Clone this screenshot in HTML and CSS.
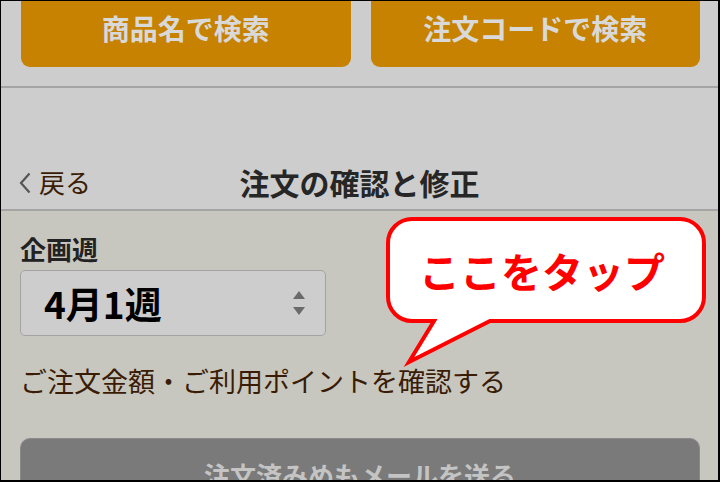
FILE: index.html
```html
<!DOCTYPE html>
<html lang="ja">

<head>
  <meta charset="UTF-8" />
  <meta name="viewport" content="width=device-width, initial-scale=1.0" />
  <title>注文の確認と修正</title>
  <link rel="stylesheet" href="styles.css">
</head>

<body>
  <div class="frame">

    <!-- Search buttons -->
    <div class="search-bar">
      <div class="search-btn">商品名で検索</div>
      <div class="search-btn">注文コードで検索</div>
    </div>

    <!-- Page header -->
    <div class="page-header">
      <a class="back-link">
        <svg class="chev" width="12" height="22" viewBox="0 0 12 22">
          <path d="M10.5 1.5 L2 11 L10.5 20.5" fill="none" stroke="#555" stroke-width="2.2" />
        </svg>戻る
      </a>
      <h1>注文の確認と修正</h1>
      <span></span>
    </div>

    <!-- Content -->
    <div class="content">
      <label class="field-label">企画週</label>
      <div class="week-select">
        <span>4月1週</span>
        <svg class="arrows" width="12" height="26" viewBox="0 0 12 26">
          <path d="M6 1 L12 9 H0 Z" fill="#6a6a6a" />
          <path d="M0 17 H12 L6 25 Z" fill="#6a6a6a" />
        </svg>
      </div>
      <p class="confirm-link">ご注文金額・ご利用ポイントを確認する</p>
      <div class="mail-btn">注文済みめもメールを送る</div>
    </div>

    <!-- Callout -->
    <div class="callout">
      <svg width="324" height="154" viewBox="384 215 324 154">
        <path d="M412 219 H680 A24 24 0 0 1 704 243 V297 A24 24 0 0 1 680 321 H490 L409 362 L434 321 H412 A24 24 0 0 1 388 297 V243 A24 24 0 0 1 412 219 Z"
          fill="#fff" stroke="#ff0000" stroke-width="4" stroke-linejoin="miter" stroke-miterlimit="10" />
      </svg>
      <div class="callout-text">ここをタップ</div>
    </div>

  </div>
</body>

</html>
```

FILE: styles.css
```css
* {
  margin: 0;
  padding: 0;
  box-sizing: border-box;
}

html,
body {
  width: 720px;
  height: 482px;
  overflow: hidden;
  font-family: "Noto Sans CJK JP", "Noto Sans", sans-serif;
}

.frame {
  position: relative;
  width: 720px;
  height: 482px;
  border-style: solid;
  border-color: #000;
  border-width: 1px 2px 2px 1px;
  background-color: #c8c7bf;
  overflow: hidden;
}

/* top search buttons */
.search-bar {
  display: flex;
  align-items: flex-start;
  gap: 20px;
  height: 87px;
  padding: 0 18px 0 20px;
  background-color: #cdcdcd;
  border-bottom: 2px solid #a4a4a4;
}

.search-btn {
  flex: 1;
  height: 66px;
  padding-top: 7px;
  line-height: 40px;
  text-align: center;
  font-size: 28px;
  font-weight: bold;
  color: #d9d9d9;
  background-color: #c68200;
  border-radius: 0 0 9px 9px;
}

/* header */
.page-header {
  display: grid;
  grid-template-columns: 1fr auto 1fr;
  align-items: end;
  height: 123px;
  padding-bottom: 10px;
  background-color: #cdcdcd;
  border-bottom: 2px solid #a4a4a4;
}

.back-link {
  display: flex;
  align-items: center;
  gap: 8px;
  padding-left: 18px;
  font-size: 26px;
  line-height: 34px;
  color: #3a1c05;
}

.chev {
  display: block;
  margin-top: 2px;
}

.page-header h1 {
  font-size: 30px;
  line-height: 34px;
  font-weight: bold;
  color: #262626;
}

/* content */
.content {
  display: flex;
  flex-direction: column;
  align-items: flex-start;
  padding: 23px 18px 0 19px;
}

.field-label {
  font-size: 26px;
  line-height: 30px;
  font-weight: bold;
  color: #222;
}

.week-select {
  display: flex;
  justify-content: space-between;
  align-items: center;
  width: 306px;
  height: 66px;
  margin-top: 6px;
  padding: 0 20px 0 23px;
  background-color: #cdcdcd;
  border: 1px solid #a3a3a3;
  border-radius: 5px;
  font-size: 37px;
  font-weight: bold;
  color: #000;
}

.confirm-link {
  margin-top: 27px;
  font-size: 27px;
  line-height: 36px;
  color: #3a1c05;
}

.mail-btn {
  align-self: stretch;
  height: 80px;
  margin-top: 39px;
  padding-top: 19px;
  line-height: 34px;
  text-align: center;
  font-size: 26px;
  font-weight: bold;
  color: #c4c4c4;
  background-color: #7a7a7a;
  border: 1px solid #8a8a8a;
  border-radius: 10px;
}

/* callout over the page */
.callout {
  position: absolute;
  left: 383px;
  top: 214px;
  width: 324px;
  height: 154px;
}

.callout svg {
  display: block;
}

.callout-text {
  position: absolute;
  top: 4px;
  left: 4px;
  width: 316px;
  height: 102px;
  display: flex;
  justify-content: center;
  align-items: center;
  padding-right: 8px;
  font-size: 41px;
  font-weight: bold;
  color: #ff0000;
}
```
